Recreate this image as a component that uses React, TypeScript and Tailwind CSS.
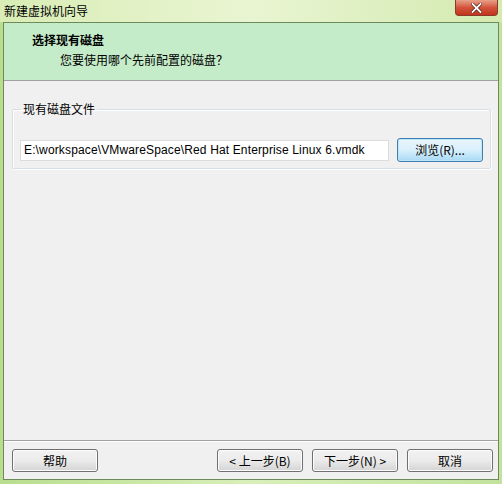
import React from "react";

const cjk = { fontFamily: '"Noto Sans CJK SC", "Liberation Sans", sans-serif' };

function WinButton({ label, className = "" }: { label: string; className?: string }) {
  return (
    <button
      className={
        "h-[23px] w-[86px] rounded-[3px] border border-[#707070] bg-gradient-to-b from-[#f2f2f2] via-[#ebebeb] to-[#d4d4d4] text-[12px] leading-none text-black shadow-[inset_0_0_0_1px_#fcfcfc] " +
        className
      }
    >
      {label}
    </button>
  );
}

export default function App() {
  return (
    <div
      className="flex h-[484px] w-[502px] flex-col overflow-hidden bg-gradient-to-r from-[#b9dd8e] via-[#d8efb9] to-[#c2e29e]"
      style={cjk}
    >
      {/* title bar */}
      <div className="relative flex h-[22px] items-center bg-gradient-to-r from-[#d9edb5] via-[#e9f5d2] to-[#d3eab0] pl-[4px]">
        <span className="text-[12px] leading-none text-black">新建虚拟机向导</span>
        <div className="absolute right-[4px] top-0 flex h-[16px] w-[43px] items-center justify-center rounded-b-[4px] border border-t-0 border-[#8a3a2a] bg-gradient-to-b from-[#e8a08a] via-[#d2533a] to-[#c2331c]">
          <svg width="11" height="10" viewBox="0 0 11 10">
            <path d="M1.5 1 L9.5 9 M9.5 1 L1.5 9" stroke="#4a1a12" strokeWidth="3.2" strokeLinecap="square" />
            <path d="M1.5 1 L9.5 9 M9.5 1 L1.5 9" stroke="#ffffff" strokeWidth="1.8" strokeLinecap="square" />
          </svg>
        </div>
      </div>

      {/* client area */}
      <div className="mx-[3px] flex flex-1 flex-col border border-[#6d8a5a] bg-[#f0f0f0]">
        {/* header */}
        <div className="flex h-[58px] flex-col border-b border-[#a0a0a0] bg-[#c5ecc9] pl-[28px] pt-[9px]">
          <span className="text-[12px] font-bold leading-[16px] text-black">选择现有磁盘</span>
          <span className="pl-[28px] pt-[4px] text-[12px] leading-[16px] text-black">您要使用哪个先前配置的磁盘？</span>
        </div>

        {/* body */}
        <div className="flex flex-1 flex-col px-[8px] pt-[21px]">
          <fieldset className="mr-[3px] h-[67px] rounded-[2px] border border-[#d5dfe5] px-[7px] pt-[22px] shadow-[inset_1px_1px_0_#ffffff,1px_1px_0_#ffffff]">
            <legend className="ml-[1px] px-[2px] text-[12px] leading-[14px] text-black">现有磁盘文件</legend>
            <div className="flex items-center gap-[8px]">
              <div
                className="flex h-[21px] w-[369px] items-center border border-[#dcdcdc] bg-white pl-[3px] text-[12px] tracking-[0.14px] text-black"
                style={{ fontFamily: '"Liberation Sans", sans-serif' }}
              >
                E:\workspace\VMwareSpace\Red Hat Enterprise Linux 6.vmdk
              </div>
              <button
                className="h-[24px] w-[86px] rounded-[3px] border border-[#3c7fb1] bg-gradient-to-b from-[#eaf6fd] via-[#d9f0fc] to-[#a7d9f5] text-[12px] leading-none text-black shadow-[inset_0_0_0_1px_#c0e4f8]"
              >
                浏览(R)...
              </button>
            </div>
          </fieldset>
        </div>

        {/* footer */}
        <div className="flex h-[39px] items-center border-t border-[#a0a0a0] pl-[8px] pr-[5px] pt-[1px] shadow-[inset_0_1px_0_#ffffff]">
          <WinButton label="帮助" />
          <div className="flex-1" />
          <WinButton label="< 上一步(B)" />
          <WinButton label="下一步(N) >" className="ml-[9px]" />
          <WinButton label="取消" className="ml-[9px]" />
        </div>
      </div>
      <div className="h-[4px]" />
    </div>
  );
}
